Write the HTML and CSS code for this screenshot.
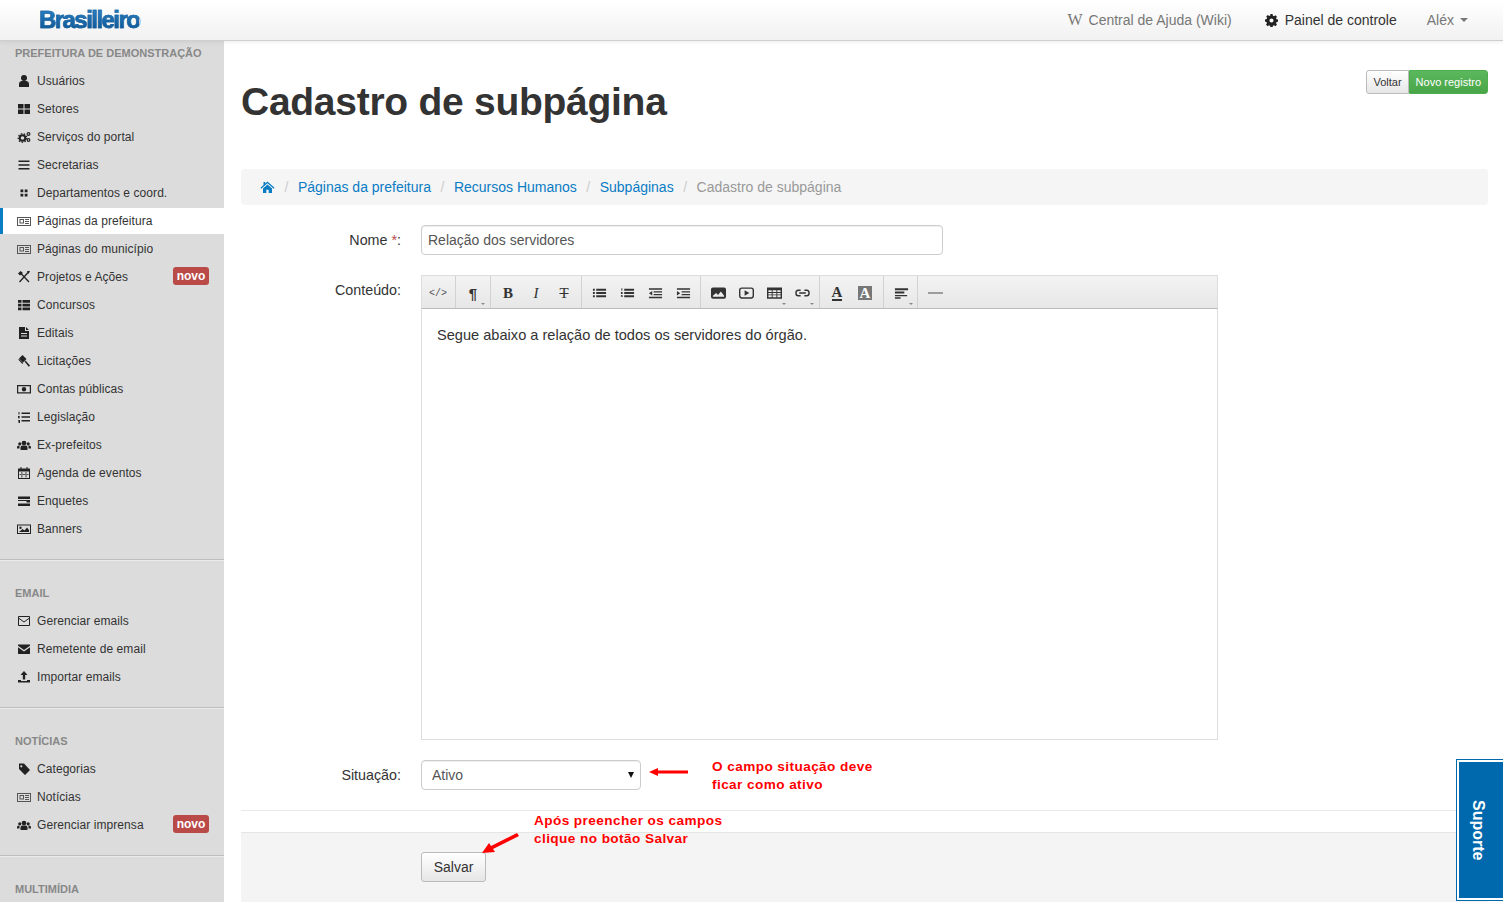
FILE: index.html
```html
<!DOCTYPE html>
<html lang="pt-BR">
<head>
    <meta charset="UTF-8">
    <title>Cadastro de subpágina</title>
    <link rel="stylesheet" href="styles.css">
</head>
<body>
    <svg class="defs" width="0" height="0">
        <symbol id="i-news" viewBox="0 0 14 14"><path fill="#555" fill-rule="evenodd" d="M0 3h14v9H0zM1 4v7h12V4zM2.500 5H7v4.500H2.500zM3.500 6v2.500H6V6zM8 5h4v1H8zM8 7h4v1H8zM8 9h4v1H8z"/></symbol>
        <symbol id="i-users" viewBox="0 0 14 14"><g fill="#222"><circle cx="7" cy="5" r="2.300"/><circle cx="2.800" cy="5.800" r="1.600"/><circle cx="11.200" cy="5.800" r="1.600"/><path d="M3.500 12V9.500Q3.500 7.500 5.500 7.500h3q2 0 2 2V12zM0 10.500V9q0-1.500 2-1.500h.5Q2.500 8.500 2.500 10.500zM14 10.500V9q0-1.500-2-1.500h-.5q0 1-.0 3z"/></g></symbol>
    </svg>

    <header class="topbar">
        <a class="logo">Brasilleiro</a>
        <nav class="topnav">
            <a class="topnav-link"><span class="wiki-w">W</span>Central de Ajuda (Wiki)</a>
            <a class="topnav-link dark">
                <svg class="gear" viewBox="0 0 14 14"><path fill="#222" fill-rule="evenodd" d="M5.800 0h2.400l.3 1.800 1.200.5 1.500-1 1.700 1.700-1 1.500.5 1.200 1.800.3v2.400l-1.800.3-.5 1.200 1 1.500-1.700 1.700-1.500-1-1.200.5-.3 1.800H5.800l-.3-1.800-1.200-.5-1.500 1-1.700-1.700 1-1.500-.5-1.200L0 8.200V5.800l1.800-.3.5-1.200-1-1.500L3 1.100l1.500 1 1.200-.5zM7 4.800a2.200 2.200 0 1 0 0 4.400 2.200 2.200 0 0 0 0-4.400z"/></svg>
                Painel de controle
            </a>
            <a class="topnav-link user">Aléx<span class="caret"></span></a>
        </nav>
    </header>

    <div class="layout">
        <aside class="sidebar">
            <section class="side-group">
                <h4>Prefeitura de demonstração</h4>
                <a class="side-item"><svg class="ico" viewBox="0 0 14 14"><circle cx="7" cy="4" r="3" fill="#222"/><path fill="#222" d="M2 13V9.500Q2 7.500 4.500 7h5q2.500.5 2.500 2.500V13z"/></svg>Usuários</a>
                <a class="side-item"><svg class="ico" viewBox="0 0 14 14"><path fill="#222" d="M1 2h5.500v4.500H1zM7.500 2H13v4.500H7.500zM1 7.500h5.500V12H1zM7.500 7.500H13V12H7.500z"/></svg>Setores</a>
                <a class="side-item"><svg class="ico" viewBox="0 0 14 14"><circle cx="5.500" cy="8" r="2.800" fill="none" stroke="#222" stroke-width="2"/><circle cx="5.500" cy="8" r="4.300" fill="none" stroke="#222" stroke-width="1.200" stroke-dasharray="1.500 1.500"/><circle cx="11.500" cy="4" r="1.400" fill="none" stroke="#222" stroke-width="1.200"/><circle cx="11.500" cy="10" r="1.300" fill="none" stroke="#222" stroke-width="1.200"/></svg>Serviços do portal</a>
                <a class="side-item"><svg class="ico" viewBox="0 0 14 14"><path fill="#222" d="M1.500 2.500h11v1.500h-11zM1.500 6.250h11v1.500h-11zM1.500 10h11v1.500h-11z"/></svg>Secretarias</a>
                <a class="side-item"><svg class="ico" viewBox="0 0 14 14"><path fill="#222" d="M3.500 3.500h2.800v2.800H3.500zM7.700 3.500h2.800v2.800H7.700zM3.500 7.700h2.800v2.800H3.500zM7.700 7.700h2.800v2.800H7.700z"/></svg>Departamentos e coord.</a>
                <a class="side-item active"><svg class="ico" viewBox="0 0 14 14"><use href="#i-news"/></svg>Páginas da prefeitura</a>
                <a class="side-item"><svg class="ico" viewBox="0 0 14 14"><use href="#i-news"/></svg>Páginas do município</a>
                <a class="side-item"><svg class="ico" viewBox="0 0 14 14"><path fill="none" stroke="#222" stroke-width="1.300" d="M3 2.500 12 12M11.500 2 2.500 12"/><path fill="#222" d="M1 3.500 3.500 1 6 3 3 5.500zM10 1h3L11.500 4z"/></svg>Projetos e Ações<span class="badge">novo</span></a>
                <a class="side-item"><svg class="ico" viewBox="0 0 14 14"><path fill="#222" d="M1 2h3.500v2.800H1zM5.500 2H13v2.800H5.500zM1 5.800h3.500v2.800H1zM5.500 5.800H13v2.800H5.500zM1 9.500h3.500v2.800H1zM5.500 9.500H13v2.800H5.500z"/></svg>Concursos</a>
                <a class="side-item"><svg class="ico" viewBox="0 0 14 14"><path fill="#222" fill-rule="evenodd" d="M2 1h6v4h4v8H2zM9 1l3 3H9zM4 7v1h6V7zM4 9.500v1h6v-1z"/></svg>Editais</a>
                <a class="side-item"><svg class="ico" viewBox="0 0 14 14"><path fill="#222" d="M5.500 1 9.500 5 6 8.500 2 4.500zM7.500 7.500 8.500 6.500 13 11.500 11.800 12.700z"/><path fill="#222" d="M1.200 5.500 2.200 5l4 4-.8 1z"/></svg>Licitações</a>
                <a class="side-item"><svg class="ico" viewBox="0 0 14 14"><path fill="#222" fill-rule="evenodd" d="M0 3h14v8.500H0zM1.200 4.200v6h11.600v-6zM7 5a2.200 2.200 0 1 1 0 4.500A2.200 2.200 0 0 1 7 5z"/></svg>Contas públicas</a>
                <a class="side-item"><svg class="ico" viewBox="0 0 14 14"><path fill="#222" d="M4.500 2.500H13v1.500H4.500zM4.500 6.200H13v1.500H4.500zM4.500 10H13v1.500H4.500zM1.500 2h1v2.500h-1zM1 6h2v.8H2v.6h1v.8H1zM1 10h2v3H1v-.6h1v-.5H1.300v-.6H2v-.6H1z"/></svg>Legislação</a>
                <a class="side-item"><svg class="ico" viewBox="0 0 14 14"><use href="#i-users"/></svg>Ex-prefeitos</a>
                <a class="side-item"><svg class="ico" viewBox="0 0 14 14"><path fill="#222" fill-rule="evenodd" d="M1 2.500h2.500V1h1v1.500h5V1h1v1.500H13V13H1zM2 5.500V12h10V5.500zM4.500 6v5.500h.8V6zM8.600 6v5.500h.8V6zM2.500 8.300v.8h9v-.8z"/></svg>Agenda de eventos</a>
                <a class="side-item"><svg class="ico" viewBox="0 0 14 14"><path fill="#222" d="M1 2.500h12v2.500H1zM1 6h12v2.500H9.500V7H1zM1 9.500h12V12H1z"/></svg>Enquetes</a>
                <a class="side-item"><svg class="ico" viewBox="0 0 14 14"><path fill="#222" fill-rule="evenodd" d="M0 2.500h14v9.500H0zM1 3.500V11h12V3.500zM2 10 5.500 7l2 1.500L10 5.500 12 8v2zM3.500 4.500a1.200 1.200 0 1 1 0 2.400 1.200 1.200 0 0 1 0-2.400z"/></svg>Banners</a>
            </section>
            <section class="side-group">
                <h4>Email</h4>
                <a class="side-item"><svg class="ico" viewBox="0 0 14 14"><path fill="none" stroke="#222" d="M1.500 2.500h11v9h-11zM1.500 4l5.500 4 5.500-4"/></svg>Gerenciar emails</a>
                <a class="side-item"><svg class="ico" viewBox="0 0 14 14"><path fill="#222" d="M1 2.500h12v1.200L7 8 1 3.700zM1 5.200 7 9.500l6-4.300V12H1z"/></svg>Remetente de email</a>
                <a class="side-item"><svg class="ico" viewBox="0 0 14 14"><path fill="#222" d="M7 1 10.500 5H8.200v4.500H5.800V5H3.500zM1 10h3v1h6v-1h3v2.500H1z"/></svg>Importar emails</a>
            </section>
            <section class="side-group">
                <h4>Notícias</h4>
                <a class="side-item"><svg class="ico" viewBox="0 0 14 14"><path fill="#222" fill-rule="evenodd" d="M2 1.500h5L13 8l-5 5-6-6zM4.300 3.200a1.100 1.100 0 1 0 0 2.200 1.100 1.100 0 0 0 0-2.200z"/></svg>Categorias</a>
                <a class="side-item"><svg class="ico" viewBox="0 0 14 14"><use href="#i-news"/></svg>Notícias</a>
                <a class="side-item"><svg class="ico" viewBox="0 0 14 14"><use href="#i-users"/></svg>Gerenciar imprensa<span class="badge">novo</span></a>
            </section>
            <section class="side-group">
                <h4>Multimídia</h4>
            </section>
        </aside>

        <main class="content">
            <div class="page-head">
                <h1>Cadastro de subpágina</h1>
                <div class="btn-group">
                    <a class="btn-sm">Voltar</a>
                    <a class="btn-sm green">Novo registro</a>
                </div>
            </div>

            <ol class="breadcrumb">
                <li><a><svg class="home" viewBox="0 0 14 14"><path fill="#0a7cc4" d="M7 1.500 14 7.800l-.8.9L7 3.200.8 8.700 0 7.800 3 5.100V2h1.800v1.500zM2.500 8.500 7 4.500l4.500 4V13H8.200V9.800H5.800V13H2.500z"/></svg></a></li>
                <li><a>Páginas da prefeitura</a></li>
                <li><a>Recursos Humanos</a></li>
                <li><a>Subpáginas</a></li>
                <li class="current">Cadastro de subpágina</li>
            </ol>

            <form class="form">
                <div class="form-row">
                    <label class="form-label">Nome <span class="req">*</span>:</label>
                    <input class="input name-input" type="text" value="Relação dos servidores">
                </div>
                <div class="form-row">
                    <label class="form-label editor-label">Conteúdo:</label>
                    <div class="editor">
                        <div class="toolbar">
                            <div class="tb-group first"><span class="tb-btn code">&lt;/&gt;</span></div>
                            <div class="tb-group"><span class="tb-btn para drop">¶</span></div>
                            <div class="tb-group">
                                <span class="tb-btn serif"><b>B</b></span>
                                <span class="tb-btn serif"><i>I</i></span>
                                <span class="tb-btn serif"><s>T</s></span>
                            </div>
                            <div class="tb-group">
                                <span class="tb-btn"><svg class="tb-ico" viewBox="0 0 16 12"><path fill="#333" d="M1 1.500h2v2H1zM4.500 1.500H15v2H4.500zM1 5h2v2H1zM4.500 5H15v2H4.500zM1 8.500h2v2H1zM4.500 8.500H15v2H4.500z"/></svg></span>
                                <span class="tb-btn"><svg class="tb-ico" viewBox="0 0 16 12"><path fill="#333" d="M1.500 1h1v2.500h-1zM1 8h2v.7H2v.5h1v.8H1zM1 4.800h2v.8H2v.6h1v.8H1zM4.500 1.500H15v2H4.500zM4.500 5H15v2H4.500zM4.500 8.500H15v2H4.500z"/></svg></span>
                                <span class="tb-btn"><svg class="tb-ico" viewBox="0 0 16 12"><path fill="#333" d="M1 1h14v1.500H1zM6 4h9v1.500H6zM6 7h9v1.500H6zM1 10h14v1.500H1zM4.500 3.800v4.900L1 6.200z"/></svg></span>
                                <span class="tb-btn"><svg class="tb-ico" viewBox="0 0 16 12"><path fill="#333" d="M1 1h14v1.500H1zM6 4h9v1.500H6zM6 7h9v1.500H6zM1 10h14v1.500H1zM1 3.800v4.900l3.500-2.500z"/></svg></span>
                            </div>
                            <div class="tb-group">
                                <span class="tb-btn"><svg class="tb-ico" viewBox="0 0 16 12"><path fill="#333" fill-rule="evenodd" d="M2 0h12q2 0 2 2v8q0 2-2 2H2q-2 0-2-2V2q0-2 2-2zM2 2v8h12V9L10.500 4.500 7.500 8 5.500 6 2 9z"/></svg></span>
                                <span class="tb-btn"><svg class="tb-ico" viewBox="0 0 16 12"><path fill="#333" fill-rule="evenodd" d="M3 0h10q3 0 3 3v6q0 3-3 3H3q-3 0-3-3V3q0-3 3-3zM3 1.500Q1.500 1.500 1.500 3v6q0 1.500 1.500 1.500h10q1.500 0 1.500-1.500V3q0-1.500-1.500-1.500zM6 3l5 3-5 3z"/></svg></span>
                                <span class="tb-btn drop"><svg class="tb-ico" viewBox="0 0 16 12"><path fill="#333" fill-rule="evenodd" d="M0 0h16v12H0zM1.500 3v2h3.500V3zM6 3v2h4V3zM11 3v2h3.500V3zM1.500 6v1.500h3.500V6zM6 6v1.500h4V6zM11 6v1.500h3.500V6zM1.500 8.500v2h3.500v-2zM6 8.500v2h4v-2zM11 8.500v2h3.500v-2z"/></svg></span>
                                <span class="tb-btn drop"><svg class="tb-ico" viewBox="0 0 16 12"><path fill="none" stroke="#333" stroke-width="1.500" d="M6 3H3.500Q1 3 1 6t2.500 3H6M10 3h2.500Q15 3 15 6t-2.500 3H10M4.500 6h7"/></svg></span>
                            </div>
                            <div class="tb-group colors">
                                <span class="tb-btn serif color-a"><b>A</b></span>
                                <span class="tb-btn serif bg-a"><b>A</b></span>
                            </div>
                            <div class="tb-group align"><span class="tb-btn drop"><svg class="tb-ico" viewBox="0 0 16 12"><path fill="#333" d="M1 1h14v2H1zM1 4.500h10v2H1zM1 8h13v1.500H1zM1 10.500h6V12H1z"/></svg></span></div>
                            <div class="tb-group last"><span class="tb-btn"><svg class="tb-ico" viewBox="0 0 16 12"><path fill="#444" d="M0 5.500h16v1H0z"/></svg></span></div>
                        </div>
                        <div class="editor-body">Segue abaixo a relação de todos os servidores do órgão.</div>
                    </div>
                </div>
                <div class="form-row">
                    <label class="form-label">Situação:</label>
                    <div class="select-wrap">
                        <select class="input status-select">
                            <option>Ativo</option>
                            <option>Inativo</option>
                        </select>
                    </div>
                </div>
                <div class="form-actions">
                    <button class="btn-save" type="button">Salvar</button>
                </div>
            </form>
        </main>
    </div>

    <!-- anotacoes em vermelho por cima da tela -->
    <div class="note note-status">O campo situação deve<br>ficar como ativo</div>
    <div class="note note-save">Após preencher os campos<br>clique no botão Salvar</div>
    <svg class="arrow arrow-status" viewBox="0 0 40 10"><path fill="#f00" d="M0 5 9 1v2.500h30v3H9V9z"/></svg>
    <svg class="arrow arrow-save" viewBox="0 0 40 22"><path fill="#f00" d="M1 21 8 11l2 3L36 1l2 3L12 17l2 3z"/></svg>

    <a class="support">Suporte</a>
</body>
</html>
```

FILE: styles.css
```css
* {
    box-sizing: border-box;
}

html, body {
    height: 100%;
}

body {
    margin: 0;
    height: 100vh;
    overflow: hidden;
    background: #fff;
    color: #333;
    font-family: "Liberation Sans", Arial, sans-serif;
    font-size: 14px;
}

.defs {
    position: absolute;
}

/* topo */
.topbar {
    position: relative;
    z-index: 2;
    display: flex;
    justify-content: space-between;
    align-items: center;
    height: 41px;
    padding: 0 35px 0 39px;
    background: linear-gradient(#fff, #f1f1f1);
    border-bottom: 1px solid #cfcfcf;
    box-shadow: 0 1px 5px rgba(0, 0, 0, .08);
}

.logo {
    font-size: 24px;
    font-weight: bold;
    letter-spacing: -1.55px;
    background: linear-gradient(#2f86c8, #0a4f8c);
    -webkit-background-clip: text;
    background-clip: text;
    color: transparent;
    -webkit-text-stroke: .5px #11609f;
}

.topnav {
    display: flex;
    align-items: center;
    gap: 30px;
}

.topnav-link {
    display: flex;
    align-items: center;
    color: #777;
}

.topnav-link.dark {
    margin-left: 3px;
    color: #333;
}

.wiki-w {
    width: 21px;
    font-family: "Liberation Serif", serif;
    font-size: 16px;
}

.gear {
    width: 13px;
    height: 13px;
    margin-right: 7px;
}

.caret {
    width: 0;
    height: 0;
    margin-left: 6px;
    border-top: 4px solid #777;
    border-left: 4px solid transparent;
    border-right: 4px solid transparent;
}

.layout {
    display: flex;
    height: calc(100vh - 41px);
}

/* menu lateral */
.sidebar {
    flex: 0 0 224px;
    background: #dcdcdc;
    overflow: hidden;
}

.side-group {
    padding: 24px 0 17px;
    border-bottom: 1px solid #bdbdbd;
    box-shadow: 0 1px 0 #ececec;
    margin-bottom: 1px;
}

.side-group:first-child {
    padding-top: 4px;
}

.side-group h4 {
    margin: 0 0 7px 15px;
    height: 16px;
    color: #888;
    font-size: 11px;
    line-height: 16px;
    font-weight: bold;
    text-transform: uppercase;
}

.side-item {
    display: flex;
    align-items: center;
    height: 26px;
    margin-bottom: 2px;
    padding-left: 17px;
    padding-right: 15px;
    color: #333;
    font-size: 12px;
    letter-spacing: .07px;
}

.side-item:last-child {
    margin-bottom: 0;
}

.side-item.active {
    background: #fff;
    border-left: 3px solid #0a7cc4;
    padding-left: 14px;
}

.ico {
    flex: none;
    width: 14px;
    height: 14px;
    margin-right: 6px;
}

.badge {
    margin: 0 0 2px auto;
    width: 36px;
    height: 18px;
    line-height: 18px;
    text-align: center;
    border-radius: 3px;
    background: #b94a48;
    color: #fff;
    font-size: 12px;
    font-weight: bold;
    letter-spacing: 0;
}

/* conteudo */
.content {
    flex: 1;
    min-width: 0;
    padding: 0 15px 0 17px;
}

.page-head {
    display: flex;
    justify-content: space-between;
    align-items: flex-start;
    height: 128px;
    padding-top: 29px;
}

.page-head h1 {
    margin: 9px 0 0;
    font-size: 39px;
    line-height: 46px;
    font-weight: bold;
    letter-spacing: -.27px;
    color: #333;
}

.btn-group {
    display: flex;
}

.btn-sm {
    height: 24px;
    padding: 0 6px;
    border: 1px solid #bbb;
    border-radius: 3px 0 0 3px;
    background: linear-gradient(#fff, #e6e6e6);
    color: #333;
    font-size: 11px;
    line-height: 22px;
}

.btn-sm.green {
    border-color: #4cae4c;
    border-radius: 0 3px 3px 0;
    background: linear-gradient(#5cb85c, #48a548);
    color: #fff;
}

.breadcrumb {
    display: flex;
    align-items: center;
    height: 36px;
    margin: 0 0 20px;
    padding: 0 0 0 19px;
    list-style: none;
    border-radius: 4px;
    background: #f5f5f5;
}

.breadcrumb li + li::before {
    content: "/";
    padding: 0 9.5px;
    color: #ccc;
}

.breadcrumb a {
    color: #0a7cc4;
}

.breadcrumb .current {
    color: #999;
}

.home {
    display: block;
    width: 15px;
    height: 14px;
}

/* formulario */
.form-row {
    display: grid;
    grid-template-columns: 160px 1fr;
    column-gap: 20px;
    align-items: center;
    margin-bottom: 20px;
}

.form-label {
    text-align: right;
    font-size: 14.3px;
}

.editor-label {
    align-self: start;
    padding-top: 7px;
}

.req {
    color: #b94a48;
}

.input {
    display: block;
    height: 30px;
    padding: 0 6px;
    border: 1px solid #ccc;
    border-radius: 4px;
    background: #fff;
    color: #555;
    font-family: inherit;
    font-size: 14px;
    box-shadow: inset 0 1px 1px rgba(0, 0, 0, .07);
}

.name-input {
    width: 522px;
}

.select-wrap {
    position: relative;
    width: 220px;
}

.select-wrap::after {
    content: "";
    position: absolute;
    right: 7px;
    top: 12px;
    border-top: 6px solid #111;
    border-left: 3px solid transparent;
    border-right: 3px solid transparent;
    pointer-events: none;
}

.status-select {
    width: 100%;
    padding-left: 10px;
    appearance: none;
    -webkit-appearance: none;
}

.editor {
    width: 797px;
    border: 1px solid #ddd;
}

.toolbar {
    display: flex;
    height: 34px;
    margin: -1px -1px 0;
    background: linear-gradient(#f3f3f3, #e7e7e7);
    border: 1px solid #ddd;
    border-bottom: 1px solid #bbb;
}

.tb-group {
    display: flex;
    padding: 0 3px;
    border-right: 1px solid #d2d2d2;
}

.tb-group.first {
    padding-left: 2px;
}

.tb-group.colors {
    padding-right: 4px;
}

.tb-group.align {
    padding-right: 2px;
}

.tb-group.last {
    border-right: 0;
}

.tb-btn {
    position: relative;
    display: flex;
    justify-content: center;
    align-items: center;
    width: 28px;
    padding-top: 2px;
    color: #333;
}

.tb-btn.drop::after {
    content: "";
    position: absolute;
    right: 2px;
    bottom: 3px;
    border-top: 2px solid #888;
    border-left: 2px solid transparent;
    border-right: 2px solid transparent;
}

.code {
    color: #555;
    font-family: "Liberation Mono", monospace;
    font-size: 10px;
}

.para {
    font-size: 15px;
    font-weight: bold;
}

.serif {
    font-family: "Liberation Serif", serif;
    font-size: 15px;
}

.color-a b {
    border-bottom: 2px solid #333;
    line-height: 13px;
}

.bg-a b {
    width: 14px;
    height: 14px;
    background: #777;
    color: #fff;
    line-height: 14px;
    text-align: center;
}

.tb-ico {
    width: 15px;
    height: 12px;
}

.editor-body {
    height: 430px;
    padding: 16px 15px;
    font-size: 14.6px;
    line-height: 20px;
}

.form-actions {
    margin-top: 42px;
    height: 90px;
    padding: 19px 0 0 180px;
    position: relative;
    background: #f4f4f4;
    border-top: 1px solid #e5e5e5;
}

.form-actions::before {
    content: "";
    position: absolute;
    left: 0;
    right: 0;
    top: -23px;
    border-top: 1px solid #e9e9e9;
}

.btn-save {
    width: 65px;
    height: 30px;
    border: 1px solid #bbb;
    border-radius: 3px;
    background: linear-gradient(#fff, #e6e6e6);
    color: #333;
    font-family: inherit;
    font-size: 14px;
}

/* anotacoes */
.note {
    position: absolute;
    color: #f00;
    font-size: 13.6px;
    line-height: 18px;
    font-weight: bold;
    letter-spacing: .42px;
}

.note-status {
    left: 712px;
    top: 758px;
}

.note-save {
    left: 534px;
    top: 812px;
}

.arrow {
    position: absolute;
}

.arrow-status {
    left: 649px;
    top: 767px;
    width: 40px;
    height: 10px;
}

.arrow-save {
    left: 481px;
    top: 832px;
    width: 40px;
    height: 22px;
}

.support {
    position: absolute;
    left: 1456px;
    top: 759px;
    width: 47px;
    height: 142px;
    display: flex;
    justify-content: center;
    align-items: center;
    padding-right: 4px;
    background: #0068ad;
    border: 1px solid #0068ad;
    border-right: 0;
    box-shadow: inset 2px 2px 0 #fff, inset 0 -2px 0 #fff;
    color: #fff;
    font-size: 16px;
    font-weight: bold;
    writing-mode: vertical-rl;
}
```
